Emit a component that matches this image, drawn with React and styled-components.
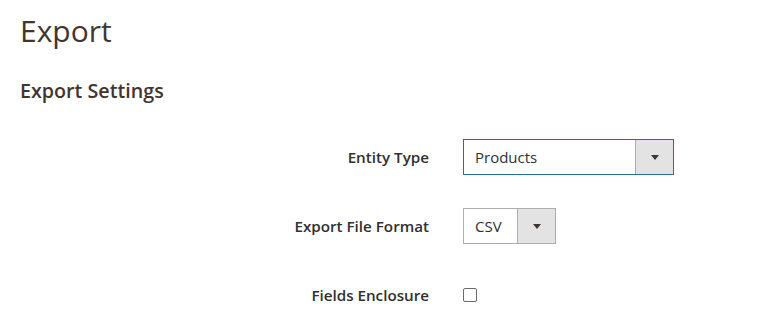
import React from "react";
import styled, { createGlobalStyle } from "styled-components";

const GlobalStyle = createGlobalStyle`
  html, body {
    margin: 0;
    padding: 0;
    background: #ffffff;
  }
  body {
    font-family: "Open Sans", "Liberation Sans", sans-serif;
    color: #303030;
  }
`;

const Page = styled.div`
  width: 782px;
  height: 332px;
  box-sizing: border-box;
  padding: 12px 20px 0 20px;
  overflow: hidden;
`;

const PageTitle = styled.h1`
  margin: 0;
  font-size: 30px;
  line-height: 37px;
  font-weight: 400;
  color: #41362f;
`;

const SectionTitle = styled.h2`
  margin: 30px 0 0 0;
  font-size: 19.7px;
  line-height: 24px;
  font-weight: 600;
  color: #41362f;
`;

const Form = styled.div`
  margin-top: 36px;
  display: grid;
  grid-template-columns: 409px auto;
  column-gap: 34px;
  row-gap: 33px;
  align-items: center;
`;

const Label = styled.label`
  text-align: right;
  font-size: 15.2px;
  font-weight: 600;
  color: #303030;
  line-height: 36px;
`;

const Control = styled.div`
  display: flex;
  align-items: center;
  height: 36px;
`;

const SelectBox = styled.div`
  display: flex;
  width: ${(p) => p.width}px;
  height: 36px;
  box-sizing: border-box;
  border: 1px solid ${(p) => (p.focused ? "#2a6e93" : "#adadad")};
  background: #ffffff;
`;

const SelectValue = styled.span`
  flex: 1;
  padding-left: 11px;
  font-size: 15px;
  line-height: 34px;
  color: #303030;
`;

const ArrowCell = styled.span`
  width: 37px;
  display: flex;
  align-items: center;
  justify-content: center;
  background: #e3e3e3;
  border-left: 1px solid #adadad;

  &::after {
    content: "";
    width: 0;
    height: 0;
    border-left: 4.5px solid transparent;
    border-right: 4.5px solid transparent;
    border-top: 5px solid #41362f;
  }
`;

const Checkbox = styled.input`
  appearance: none;
  margin: 0;
  width: 14px;
  height: 14px;
  box-sizing: border-box;
  border: 1px solid #6b6b6b;
  border-radius: 2px;
  background: #ffffff;
`;

function Select({ value, width, focused }) {
  return (
    <SelectBox width={width} focused={focused}>
      <SelectValue>{value}</SelectValue>
      <ArrowCell />
    </SelectBox>
  );
}

export default function App() {
  return (
    <Page>
      <GlobalStyle />
      <PageTitle>Export</PageTitle>
      <SectionTitle>Export Settings</SectionTitle>
      <Form>
        <Label>Entity Type</Label>
        <Control>
          <Select value="Products" width={211} focused />
        </Control>

        <Label>Export File Format</Label>
        <Control>
          <Select value="CSV" width={93} />
        </Control>

        <Label>Fields Enclosure</Label>
        <Control>
          <Checkbox type="checkbox" />
        </Control>
      </Form>
    </Page>
  );
}
